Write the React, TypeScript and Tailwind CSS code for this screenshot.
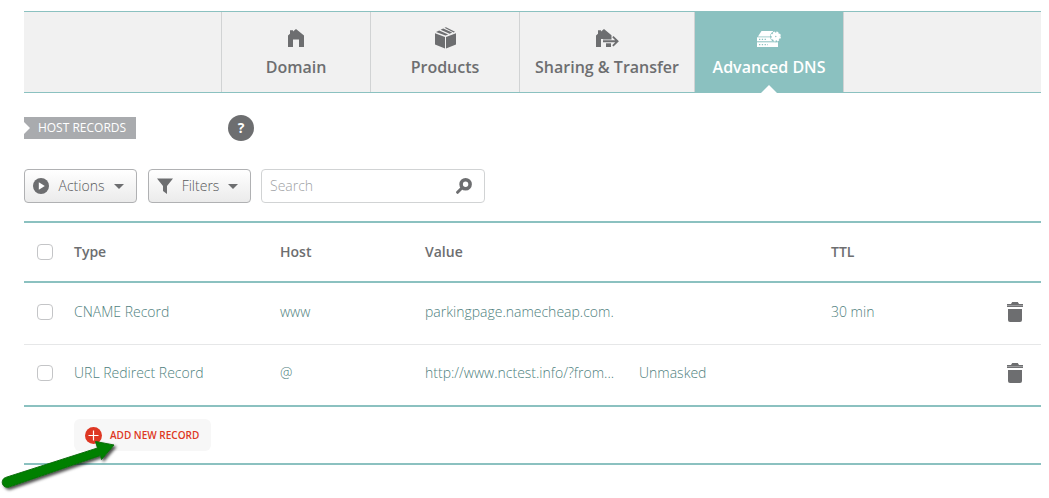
import type { ReactNode } from 'react';
import { clsx } from 'clsx';

interface NavTab {
  label: string;
  icon: ReactNode;
  width: string;
  active?: boolean;
}

interface HostRecord {
  id: string;
  type: string;
  host: string;
  value: string;
  mask?: string;
  ttl?: string;
}

const DomainIcon = () => (
  <svg width="16" height="18" viewBox="0 0 16 18" fill="currentColor" aria-hidden="true">
    <path d="M0 6.5 2 4.8V1.2h3v1.2L8 0l8 6.5V18h-5v-7.500H5V18H0z" />
  </svg>
);

const ProductsIcon = () => (
  <svg width="21" height="22" viewBox="0 0 21 22" fill="currentColor" aria-hidden="true">
    <path d="M0 6.2 10 10v11.5L0 17.5z" />
    <path d="M21 6.2 11 10v11.5l10-4z" />
    <path d="M1 5 4.200 3.400l9 4-2.700 1.200z" />
    <path d="M5.600 2.700 8.200 1.500l9 4-2.600 1.200z" />
    <path d="M9.500.8 11 .2l9 4.600-1.400.6z" />
  </svg>
);

const TransferIcon = () => (
  <svg width="23" height="18" viewBox="0 0 23 18" fill="currentColor" aria-hidden="true">
    <path d="M0 6.5 2 4.8V1.2h3v1.2L8 0l7.5 6.2v4.3H7v-.5H5V18H0z" />
    <path d="M10 14.3h5V18h-5z" />
    <path d="M7 11.3h12.2l-3-3 1.3-1.2 5.4 5.2-5.4 5.2-1.3-1.2 3-3H7z" />
  </svg>
);

const DnsIcon = () => (
  <svg width="24" height="17" viewBox="0 0 24 17" aria-hidden="true">
    <path d="M4.500 1H16l2 5.500H1z" fill="#fff" />
    <rect y="7.300" width="21" height="4" fill="#fff" />
    <rect y="12.300" width="21" height="4.700" fill="#fff" />
    <path d="M2 9.300h7M2 14.600h9" stroke="#8bc1c0" strokeWidth="1.3" strokeDasharray="1.3 1.500" />
    <circle cx="18.800" cy="6.500" r="5.700" fill="#8bc1c0" />
    <circle cx="18.800" cy="6.500" r="4.100" fill="#fff" />
    <circle cx="18.800" cy="6.500" r="4.300" fill="none" stroke="#fff" strokeWidth="1.600" strokeDasharray="2 1.377" />
    <circle cx="18.800" cy="6.500" r=".7" fill="#8bc1c0" />
  </svg>
);

const PlayIcon = () => (
  <svg width="16" height="16" viewBox="0 0 16 16" aria-hidden="true">
    <circle cx="8" cy="8" r="8" fill="#6d6e70" />
    <path d="M5.8 4.2 11.8 8l-6 3.8z" fill="#fff" />
  </svg>
);

const FunnelIcon = () => (
  <svg width="16" height="16" viewBox="0 0 16 16" fill="#6d6e70" aria-hidden="true">
    <path d="M0 .5h16L10 8v8l-4-3V8z" />
  </svg>
);

const Caret = () => (
  <svg width="10" height="5" viewBox="0 0 10 5" fill="#6d6e70" aria-hidden="true">
    <path d="M0 0h10L5 5z" />
  </svg>
);

const SearchIcon = () => (
  <svg width="16" height="16" viewBox="0 0 16 16" fill="none" stroke="#6d6e70" aria-hidden="true">
    <circle cx="9.6" cy="6.3" r="4.5" strokeWidth="3.6" />
    <path d="m5.6 10.3-4 4" strokeWidth="3" strokeLinecap="round" />
  </svg>
);

const TrashIcon = () => (
  <svg width="16" height="20" viewBox="0 0 16 20" fill="#6d6e70" aria-hidden="true">
    <path d="M0 2h4l1.2-2h5.6L12 2h4v3H0z" />
    <path d="M1 7h14v11a2 2 0 0 1-2 2H3a2 2 0 0 1-2-2z" />
    <path d="M0 3.6h16" stroke="#fff" strokeOpacity=".45" strokeWidth=".8" />
  </svg>
);

const PlusIcon = () => (
  <svg width="17" height="17" viewBox="0 0 17 17" aria-hidden="true">
    <circle cx="8.5" cy="8.5" r="8.5" fill="#de3723" />
    <path d="M8.5 3.5v10M3.5 8.5h10" stroke="#fff" strokeWidth="1.2" />
  </svg>
);

const PointerArrow = () => (
  <svg
    className="pointer-events-none absolute bottom-0 left-0"
    width="124"
    height="62"
    viewBox="0 0 124 62"
    aria-hidden="true"
  >
    <defs>
      <filter id="arrow-shadow" x="-10%" y="-10%" width="125%" height="135%">
        <feDropShadow dx="2" dy="2" stdDeviation="1.5" floodColor="#000" floodOpacity=".7" />
      </filter>
    </defs>
    <path
      d="M5.500 41.500 97.500 12 95.500 5.500 114 9 101.500 23.500 100.500 19.500 9 51A5 5 0 0 1 5.500 41.500z"
      fill="#008000"
      stroke="#0b6d0b"
      strokeLinejoin="round"
      filter="url(#arrow-shadow)"
    />
  </svg>
);

const tabs: NavTab[] = [
  { label: 'Domain', icon: <DomainIcon />, width: 'w-[149px]' },
  { label: 'Products', icon: <ProductsIcon />, width: 'w-[149px]' },
  { label: 'Sharing & Transfer', icon: <TransferIcon />, width: 'w-[175px]' },
  { label: 'Advanced DNS', icon: <DnsIcon />, width: 'w-[149px]', active: true },
];

const records: HostRecord[] = [
  { id: 'cname', type: 'CNAME Record', host: 'www', value: 'parkingpage.namecheap.com.', ttl: '30 min' },
  { id: 'redirect', type: 'URL Redirect Record', host: '@', value: 'http://www.nctest.info/?from...', mask: 'Unmasked' },
];

function NavBar() {
  return (
    <nav className="flex h-[82px] border-y border-[#8bc1c0] bg-[#f1f1f1]">
      <div className="w-[198px] shrink-0 border-r border-[#d1d3d4]" />
      {tabs.map((tab) => (
        <a
          key={tab.label}
          href="#"
          className={clsx(
            'relative flex shrink-0 flex-col items-center border-r border-[#d1d3d4] pt-3.5 text-base font-semibold whitespace-nowrap',
            tab.width,
            tab.active ? 'bg-[#8bc1c0] text-white' : 'text-[#6d6e70]'
          )}
        >
          <span className="flex h-6 items-center">{tab.icon}</span>
          <span className="mt-[5px]">{tab.label}</span>
          {tab.active && (
            <svg className="absolute -bottom-px" width="16" height="8" viewBox="0 0 16 8" aria-hidden="true">
              <path d="M0 8 8 0l8 8z" fill="#fff" />
            </svg>
          )}
        </a>
      ))}
    </nav>
  );
}

function Toolbar() {
  const buttonStyle =
    'flex h-[34px] items-center rounded border border-[#b0b1b3] bg-linear-to-b from-white to-[#ebebeb] px-2 text-sm font-light text-[#58595b]';

  return (
    <div className="mt-7 flex">
      <button type="button" className={clsx(buttonStyle, 'w-[113px] justify-between pr-3')}>
        <PlayIcon />
        <span>Actions</span>
        <Caret />
      </button>
      <button type="button" className={clsx(buttonStyle, 'ml-[11px] w-[103px] justify-between pr-3')}>
        <FunnelIcon />
        <span>Filters</span>
        <Caret />
      </button>
      <div className="ml-2.5 flex h-[34px] w-[224px] items-center rounded border border-[#d1d3d4] pr-3 pl-2">
        <input
          type="text"
          aria-label="Search"
          placeholder="Search"
          className="min-w-0 flex-1 text-sm font-light outline-none placeholder:text-[#a0a2a5]"
        />
        <SearchIcon />
      </div>
    </div>
  );
}

function RowCheckbox({ label }: { label: string }) {
  return (
    <input
      type="checkbox"
      aria-label={label}
      className="ml-[13px] block size-4 appearance-none rounded border border-[#c4c5c7] bg-white checked:bg-[#8bc1c0]"
    />
  );
}

function RecordsTable() {
  return (
    <table className="mt-[18px] w-full table-fixed border-separate border-spacing-0 border-t-2 border-[#8bc1c0] text-left text-sm">
      <colgroup>
        <col className="w-[50px]" />
        <col className="w-[206px]" />
        <col className="w-[145px]" />
        <col className="w-[214px]" />
        <col className="w-[192px]" />
        <col />
        <col className="w-[34px]" />
      </colgroup>
      <thead>
        <tr className="h-[60px] text-[#6d6e70] *:border-b-2 *:border-[#8bc1c0] *:font-semibold">
          <th><RowCheckbox label="Select all records" /></th>
          <th>Type</th>
          <th>Host</th>
          <th>Value</th>
          <th />
          <th>TTL</th>
          <th />
        </tr>
      </thead>
      <tbody>
        {records.map((record, index) => (
          <tr
            key={record.id}
            className={clsx(
              'h-[62px] font-light text-[#4f7f7e] *:pb-1',
              index === records.length - 1 ? '*:border-b-2 *:border-[#8bc1c0]' : '*:border-b *:border-[#e6e7e8]'
            )}
          >
            <td><RowCheckbox label={`Select ${record.type}`} /></td>
            <td>{record.type}</td>
            <td>{record.host}</td>
            <td className="whitespace-nowrap">{record.value}</td>
            <td>{record.mask}</td>
            <td>{record.ttl}</td>
            <td>
              <button type="button" aria-label={`Delete ${record.type}`} className="block">
                <TrashIcon />
              </button>
            </td>
          </tr>
        ))}
      </tbody>
    </table>
  );
}

export default function App() {
  return (
    <main className="relative bg-white pt-[11px] pr-2 pb-[33px] pl-6 font-['Open_Sans',sans-serif]">
      <NavBar />

      {/* section heading */}
      <div className="mt-[22px] flex items-center">
        <h2 className="relative flex h-[22px] w-[112px] items-center justify-center bg-[#a9abae] pl-1 text-xs text-white">
          <svg className="absolute left-0" width="6" height="12" viewBox="0 0 6 12" aria-hidden="true">
            <path d="M0 0 6 6 0 12z" fill="#fff" />
          </svg>
          HOST RECORDS
        </h2>
        <button
          type="button"
          aria-label="Help"
          className="ml-[92px] flex size-[26px] items-center justify-center rounded-full bg-[#6d6e70] text-sm font-bold text-white"
        >
          ?
        </button>
      </div>

      <Toolbar />
      <RecordsTable />

      {/* footer row */}
      <div className="flex h-[58px] items-center border-b-2 border-[#8bc1c0] pl-[50px]">
        <button
          type="button"
          className="flex h-8 w-[137px] items-center gap-2 rounded-md bg-[#f7f7f7] pl-[11px] text-[10px] font-semibold whitespace-nowrap text-[#de3723]"
        >
          <PlusIcon />
          ADD NEW RECORD
        </button>
      </div>

      <PointerArrow />
    </main>
  );
}
